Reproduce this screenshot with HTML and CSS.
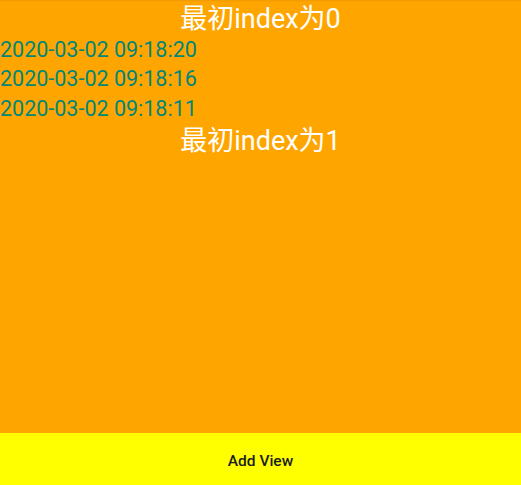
FILE: index.html
```html
<!DOCTYPE html>
<html>
<head>
<meta charset="utf-8">
<link rel="stylesheet" href="styles.css">
</head>
<body>
<div class="app">
  <div class="content">
    <div class="title first">最初index为0</div>
    <div class="time">2020-03-02 09:18:20</div>
    <div class="time">2020-03-02 09:18:16</div>
    <div class="time">2020-03-02 09:18:11</div>
    <div class="title second">最初index为1</div>
  </div>
  <div class="button">Add View</div>
</div>
</body>
</html>
```
FILE: styles.css
```css
html, body {
  margin: 0;
  padding: 0;
}
body {
  width: 521px;
  height: 485px;
  overflow: hidden;
  font-family: Roboto, "Noto Sans CJK SC", sans-serif;
}
.app {
  display: flex;
  flex-direction: column;
  height: 485px;
}
.content {
  flex: 1;
  background: linear-gradient(#f09a00 0, #ffa500 2px) #ffa500;
}
.title {
  font-size: 27px;
  line-height: 31.7px;
  color: #ffffff;
  text-align: center;
}
.title.first {
  padding-top: 3.7px;
  line-height: 31.1px;
}
.title.second {
  padding-top: 3px;
}
.time {
  font-size: 21.5px;
  line-height: 29.5px;
  color: #00877a;
}
.button {
  height: 52px;
  background: #ffff00;
  display: flex;
  align-items: center;
  justify-content: center;
  font-size: 15.5px;
  font-weight: 500;
  color: #1c1c1c;
  padding-top: 3px;
  box-sizing: border-box;
}
```
